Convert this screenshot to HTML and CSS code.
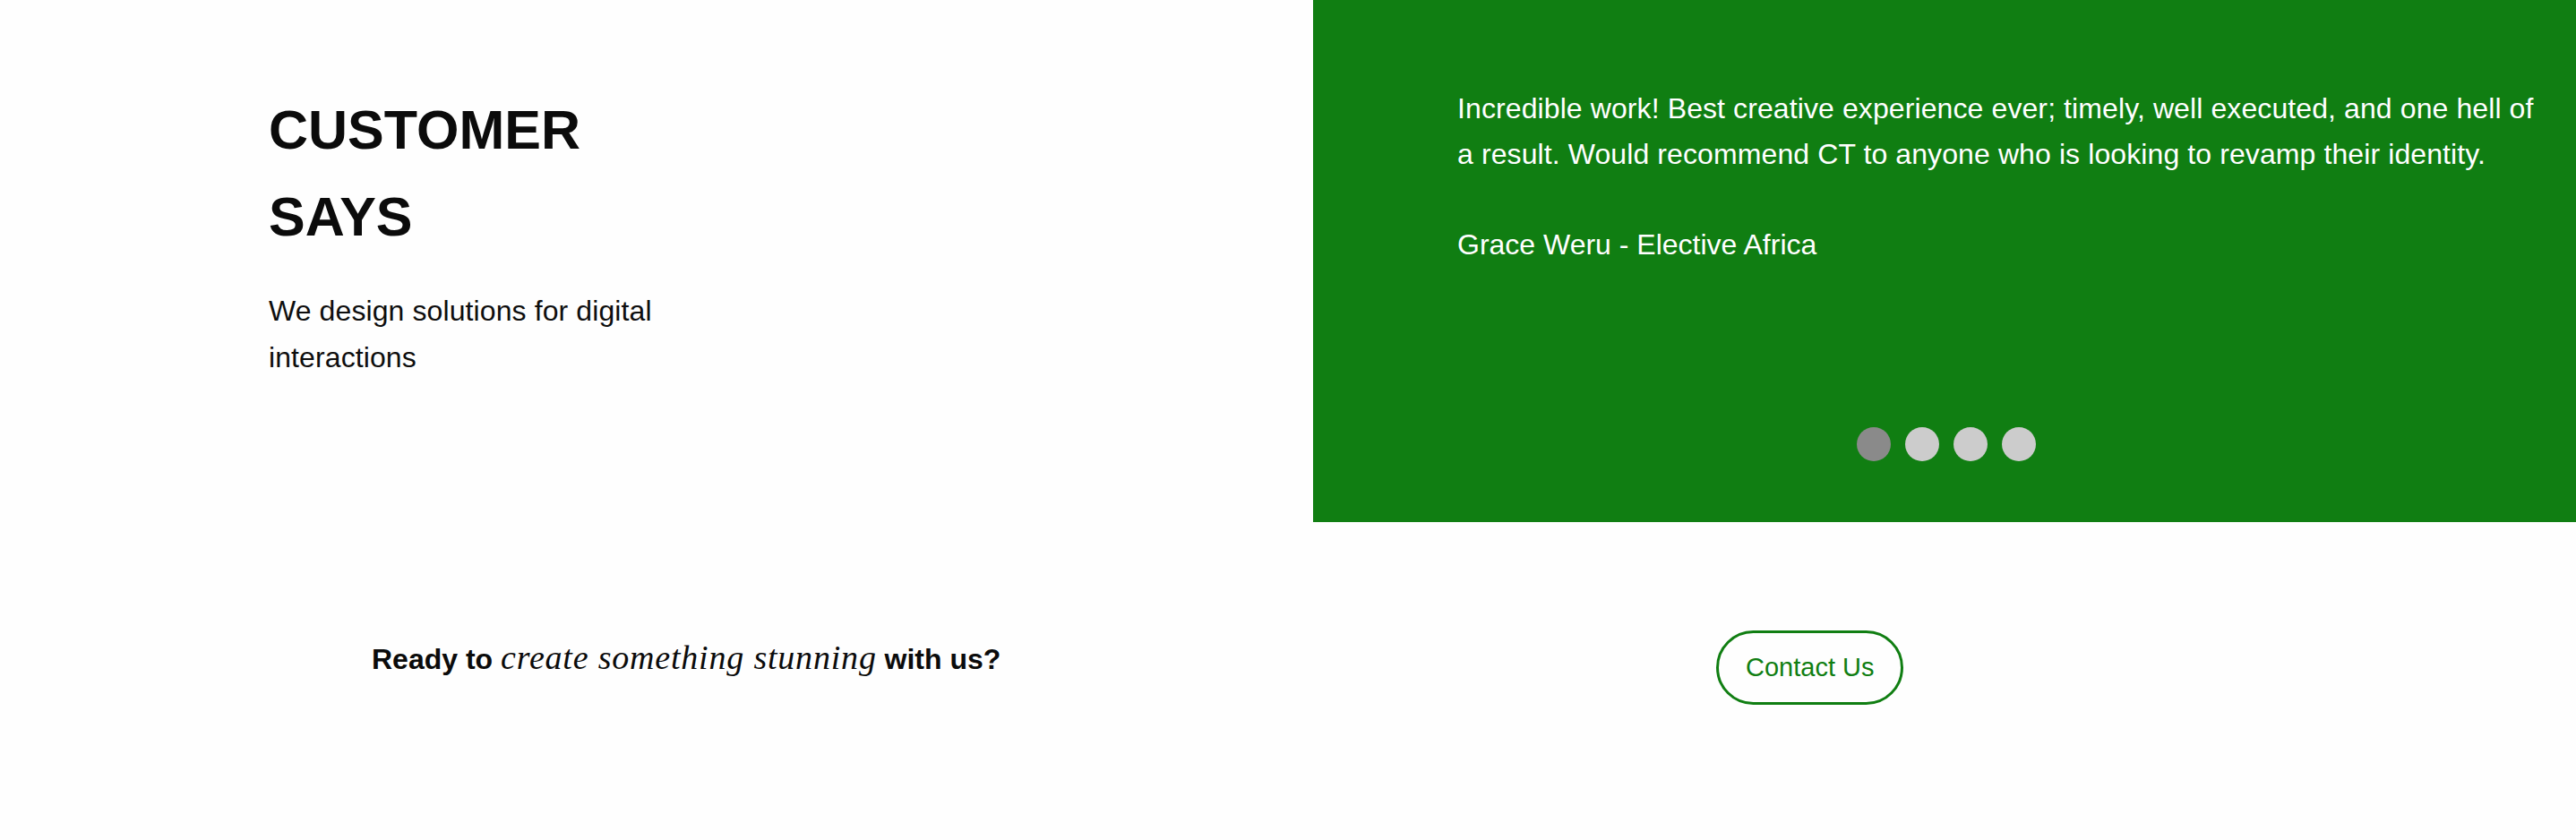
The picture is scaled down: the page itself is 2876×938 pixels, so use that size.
FILE: index.html
```html
<!DOCTYPE html>
<html lang="en">
<head>
<meta charset="utf-8">
<title>Customer Says</title>
<link rel="stylesheet" href="styles.css">
</head>
<body>
<main class="page">
  <section class="testimonials">
    <div class="intro">
      <h2 class="intro-title">CUSTOMER SAYS</h2>
      <p class="intro-text">We design solutions for digital interactions</p>
    </div>
    <div class="quote-panel">
      <blockquote class="quote">
        <p class="quote-text">Incredible work! Best creative experience ever; timely, well executed, and one hell of a result. Would recommend CT to anyone who is looking to revamp their identity.</p>
        <p class="quote-author">Grace Weru - Elective Africa</p>
      </blockquote>
      <div class="dots">
        <span class="dot dot-active"></span>
        <span class="dot"></span>
        <span class="dot"></span>
        <span class="dot"></span>
      </div>
    </div>
  </section>
  <section class="cta">
    <p class="cta-text">Ready to <em class="cta-em">create something stunning</em> with us?</p>
    <a class="cta-button" href="#">Contact Us</a>
  </section>
</main>
</body>
</html>
```
FILE: styles.css
```css
html, body {
  margin: 0;
  padding: 0;
  background: #fefefe;
}

.page {
  width: 2876px;
  height: 938px;
  font-family: "Liberation Sans", Arial, Helvetica, sans-serif;
  color: #0b0b0b;
}

.testimonials {
  display: grid;
  grid-template-columns: 1466px 1fr;
  height: 583px;
}

.intro {
  padding: 97px 0 0 300px;
}

.intro-title {
  margin: 0;
  max-width: 480px;
  font-size: 61px;
  font-weight: 700;
  line-height: 97px;
  color: #0b0b0b;
}

.intro-text {
  margin: 30px 0 0;
  max-width: 480px;
  font-size: 32px;
  font-weight: 400;
  line-height: 52px;
  letter-spacing: 0.1px;
  color: #0e0e0e;
}

.quote-panel {
  background: #107e12;
  display: flex;
  flex-direction: column;
  box-sizing: border-box;
  height: 583px;
  padding: 96px 0 68px;
}

.quote {
  margin: 0;
  padding: 0 30px 0 161px;
  color: #ffffff;
}

.quote-text {
  margin: 0;
  font-size: 32px;
  line-height: 51px;
  letter-spacing: 0.1px;
}

.quote-author {
  margin: 50px 0 0;
  font-size: 32px;
  line-height: 51px;
}

.dots {
  margin-top: auto;
  display: flex;
  justify-content: center;
  gap: 16px;
  padding-left: 4px;
}

.dot {
  width: 38px;
  height: 38px;
  border-radius: 50%;
  background: #cccccc;
}

.dot-active {
  background: #8a8a8a;
}

.cta {
  display: grid;
  grid-template-columns: 1916px auto;
  align-items: center;
  padding-top: 121px;
}

.cta-text {
  margin: 0 0 22px;
  padding-left: 415px;
  font-size: 32px;
  font-weight: 700;
  line-height: 40px;
  color: #0b0b0b;
}

.cta-em {
  font-family: "Liberation Serif", "Times New Roman", serif;
  font-style: italic;
  font-weight: 400;
  font-size: 38px;
  letter-spacing: 0.8px;
}

.cta-button {
  justify-self: start;
  display: inline-block;
  border: 3px solid #107e12;
  border-radius: 45px;
  padding: 22px 30px;
  font-size: 29px;
  line-height: 33px;
  color: #107e12;
  text-decoration: none;
}
```
